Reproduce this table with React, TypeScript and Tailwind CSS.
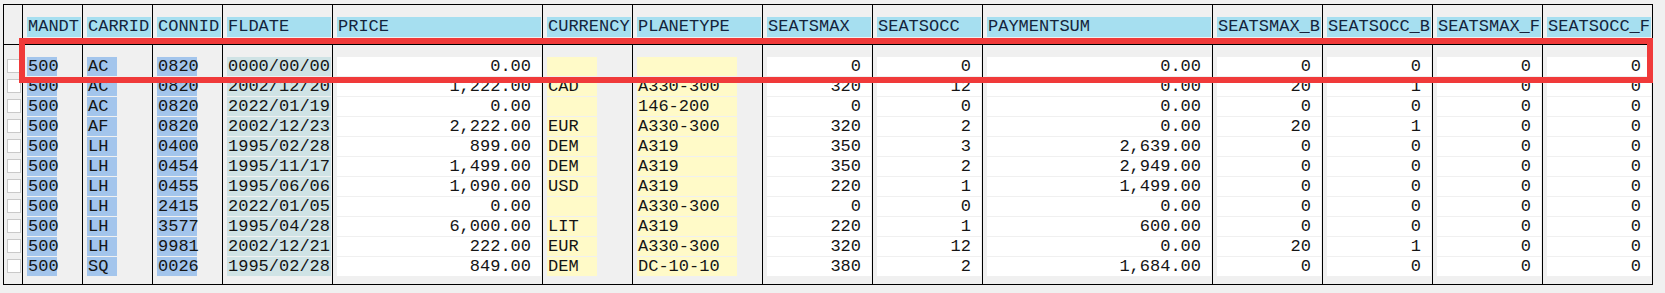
import React from "react";

type Col = {
  name: string;
  width: string;
  field: string;
  align: "left" | "right";
  last?: boolean;
};

const columns: Col[] = [
  { name: "MANDT", width: "w-[60px]", field: "w-[30px] bg-[#a3c5ec]", align: "left" },
  { name: "CARRID", width: "w-[70px]", field: "w-[30px] bg-[#a3c5ec]", align: "left" },
  { name: "CONNID", width: "w-[70px]", field: "w-[40px] bg-[#a3c5ec]", align: "left" },
  { name: "FLDATE", width: "w-[110px]", field: "flex-1 bg-[#cfe3e5]", align: "left" },
  { name: "PRICE", width: "w-[210px]", field: "flex-1 bg-white", align: "right" },
  { name: "CURRENCY", width: "w-[90px]", field: "w-[50px] bg-[#fffac8]", align: "left" },
  { name: "PLANETYPE", width: "w-[130px]", field: "w-[100px] bg-[#fffac8]", align: "left" },
  { name: "SEATSMAX", width: "w-[110px]", field: "flex-1 bg-white", align: "right" },
  { name: "SEATSOCC", width: "w-[110px]", field: "flex-1 bg-white", align: "right" },
  { name: "PAYMENTSUM", width: "w-[230px]", field: "flex-1 bg-white", align: "right" },
  { name: "SEATSMAX_B", width: "w-[110px]", field: "flex-1 bg-white", align: "right" },
  { name: "SEATSOCC_B", width: "w-[110px]", field: "flex-1 bg-white", align: "right" },
  { name: "SEATSMAX_F", width: "w-[110px]", field: "flex-1 bg-white", align: "right" },
  { name: "SEATSOCC_F", width: "w-[109px]", field: "flex-1 bg-white", align: "right", last: true },
];

const rows: string[][] = [
  ["500", "AC", "0820", "0000/00/00", "0.00", "", "", "0", "0", "0.00", "0", "0", "0", "0"],
  ["500", "AC", "0820", "2002/12/20", "1,222.00", "CAD", "A330-300", "320", "12", "0.00", "20", "1", "0", "0"],
  ["500", "AC", "0820", "2022/01/19", "0.00", "", "146-200", "0", "0", "0.00", "0", "0", "0", "0"],
  ["500", "AF", "0820", "2002/12/23", "2,222.00", "EUR", "A330-300", "320", "2", "0.00", "20", "1", "0", "0"],
  ["500", "LH", "0400", "1995/02/28", "899.00", "DEM", "A319", "350", "3", "2,639.00", "0", "0", "0", "0"],
  ["500", "LH", "0454", "1995/11/17", "1,499.00", "DEM", "A319", "350", "2", "2,949.00", "0", "0", "0", "0"],
  ["500", "LH", "0455", "1995/06/06", "1,090.00", "USD", "A319", "220", "1", "1,499.00", "0", "0", "0", "0"],
  ["500", "LH", "2415", "2022/01/05", "0.00", "", "A330-300", "0", "0", "0.00", "0", "0", "0", "0"],
  ["500", "LH", "3577", "1995/04/28", "6,000.00", "LIT", "A319", "220", "1", "600.00", "0", "0", "0", "0"],
  ["500", "LH", "9981", "2002/12/21", "222.00", "EUR", "A330-300", "320", "12", "0.00", "20", "1", "0", "0"],
  ["500", "SQ", "0026", "1995/02/28", "849.00", "DEM", "DC-10-10", "380", "2", "1,684.00", "0", "0", "0", "0"],
];

function Column({ col, index }: { col: Col; index: number }) {
  return (
    <div className={`${col.width} flex shrink-0 flex-col ${col.last ? "" : "border-r border-black"}`}>
      <div className="h-[40px] border-b border-black pl-[4px] pr-[1px] pt-[12px]">
        <div className="flex h-[20px] items-center whitespace-pre bg-[#a6dff0] pl-[1px] leading-[20px] text-[#14243c]">
          {col.name}
        </div>
      </div>
      <div className="flex flex-col gap-[1px] pl-[4px] pr-[1px] pt-[12px]">
        {rows.map((r, i) => (
          <div key={i} className="flex h-[19px]">
            <div
              className={`${col.field} flex h-[19px] items-center whitespace-pre leading-[19px] text-[#151515] ${
                col.align === "right" ? "justify-end pr-[10px]" : "pl-[1px]"
              }`}
            >
              {r[index]}
            </div>
          </div>
        ))}
      </div>
    </div>
  );
}

export default function App() {
  return (
    <div className="relative h-[293px] w-[1665px] bg-[#f0f0f0] pl-[3px] pt-[4px] font-['Liberation_Mono',monospace] text-[17px]">
      <div className="flex h-[281px] w-[1650px] border border-black">
        <div className="flex w-[19px] shrink-0 flex-col border-r border-black">
          <div className="h-[40px] border-b border-black" />
          <div className="flex flex-col gap-[1px] pl-[3px] pt-[12px]">
            {rows.map((_, i) => (
              <div key={i} className="h-[19px] pt-[2px]">
                <div className="h-[14px] w-[14px] border border-[#c9c9c9] bg-white" />
              </div>
            ))}
          </div>
        </div>
        {columns.map((c, i) => (
          <Column key={c.name} col={c} index={i} />
        ))}
      </div>
      <div className="absolute left-[19px] top-[38px] h-[45px] w-[1634px] border-[6px] border-[#f03a3a]" />
    </div>
  );
}
